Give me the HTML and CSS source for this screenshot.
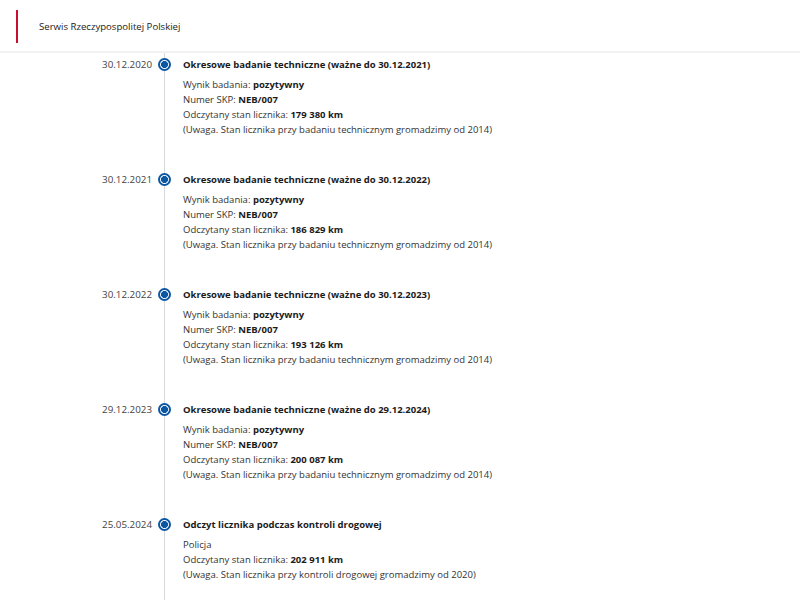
FILE: index.html
```html
<!DOCTYPE html>
<html lang="pl">
<head>
  <meta charset="UTF-8" />
  <meta name="viewport" content="width=device-width, initial-scale=1.0" />
  <title>Historia pojazdu</title>
  <link rel="stylesheet" href="styles.css">
</head>
<body>
  <header class="top-bar">
    <span class="brand">Serwis Rzeczypospolitej Polskiej</span>
  </header>

  <div class="timeline">
    <div class="event">
      <div class="event-date">30.12.2020</div>
      <div class="event-mark"><span class="dot"></span></div>
      <div class="event-body">
        <div class="event-title">Okresowe badanie techniczne (ważne do 30.12.2021)</div>
        <p>Wynik badania: <b>pozytywny</b></p>
        <p>Numer SKP: <b>NEB/007</b></p>
        <p>Odczytany stan licznika: <b>179 380 km</b></p>
        <p>(Uwaga. Stan licznika przy badaniu technicznym gromadzimy od 2014)</p>
      </div>
    </div>

    <div class="event">
      <div class="event-date">30.12.2021</div>
      <div class="event-mark"><span class="dot"></span></div>
      <div class="event-body">
        <div class="event-title">Okresowe badanie techniczne (ważne do 30.12.2022)</div>
        <p>Wynik badania: <b>pozytywny</b></p>
        <p>Numer SKP: <b>NEB/007</b></p>
        <p>Odczytany stan licznika: <b>186 829 km</b></p>
        <p>(Uwaga. Stan licznika przy badaniu technicznym gromadzimy od 2014)</p>
      </div>
    </div>

    <div class="event">
      <div class="event-date">30.12.2022</div>
      <div class="event-mark"><span class="dot"></span></div>
      <div class="event-body">
        <div class="event-title">Okresowe badanie techniczne (ważne do 30.12.2023)</div>
        <p>Wynik badania: <b>pozytywny</b></p>
        <p>Numer SKP: <b>NEB/007</b></p>
        <p>Odczytany stan licznika: <b>193 126 km</b></p>
        <p>(Uwaga. Stan licznika przy badaniu technicznym gromadzimy od 2014)</p>
      </div>
    </div>

    <div class="event">
      <div class="event-date">29.12.2023</div>
      <div class="event-mark"><span class="dot"></span></div>
      <div class="event-body">
        <div class="event-title">Okresowe badanie techniczne (ważne do 29.12.2024)</div>
        <p>Wynik badania: <b>pozytywny</b></p>
        <p>Numer SKP: <b>NEB/007</b></p>
        <p>Odczytany stan licznika: <b>200 087 km</b></p>
        <p>(Uwaga. Stan licznika przy badaniu technicznym gromadzimy od 2014)</p>
      </div>
    </div>

    <div class="event">
      <div class="event-date">25.05.2024</div>
      <div class="event-mark"><span class="dot"></span></div>
      <div class="event-body">
        <div class="event-title">Odczyt licznika podczas kontroli drogowej</div>
        <p>Policja</p>
        <p>Odczytany stan licznika: <b>202 911 km</b></p>
        <p>(Uwaga. Stan licznika przy kontroli drogowej gromadzimy od 2020)</p>
      </div>
    </div>
  </div>
</body>
</html>
```

FILE: styles.css
```css
* {
  box-sizing: border-box;
}

body {
  margin: 0;
  font-family: "Open Sans", Arial, sans-serif;
  font-size: 9.5px;
  line-height: 15px;
  color: #333;
  background: #fff;
  overflow: hidden;
}

.top-bar {
  height: 53px;
  padding: 10px 0 0 16px;
  border-bottom: 2px solid #f2f2f2;
}

.brand {
  display: inline-flex;
  align-items: center;
  height: 33px;
  padding-left: 21px;
  border-left: 2px solid #c8102e;
  font-size: 9.6px;
  color: #222;
}

.timeline {
  display: flex;
  flex-direction: column;
}

.event {
  display: grid;
  grid-template-columns: 152px 25px 1fr;
}

.event-date {
  padding: 4px 0 0 0;
  text-align: right;
  font-size: 9.8px;
  color: #444;
}

.event-mark {
  padding-top: 5px;
  background: linear-gradient(#d9d9d9, #d9d9d9) no-repeat center / 1px 100%;
}

.dot {
  display: block;
  width: 13px;
  height: 13px;
  margin: 0 auto;
  border: 2px solid #0b57a4;
  border-radius: 50%;
  background: radial-gradient(circle, #0b57a4 3.2px, #fff 3.8px);
}

.event-body {
  padding: 4px 0 31px 6px;
}

.event-title {
  font-weight: 700;
  color: #1b1b1b;
  margin-bottom: 5px;
}

.event-body p {
  margin: 0;
}

.event-body b {
  color: #1b1b1b;
}
```
